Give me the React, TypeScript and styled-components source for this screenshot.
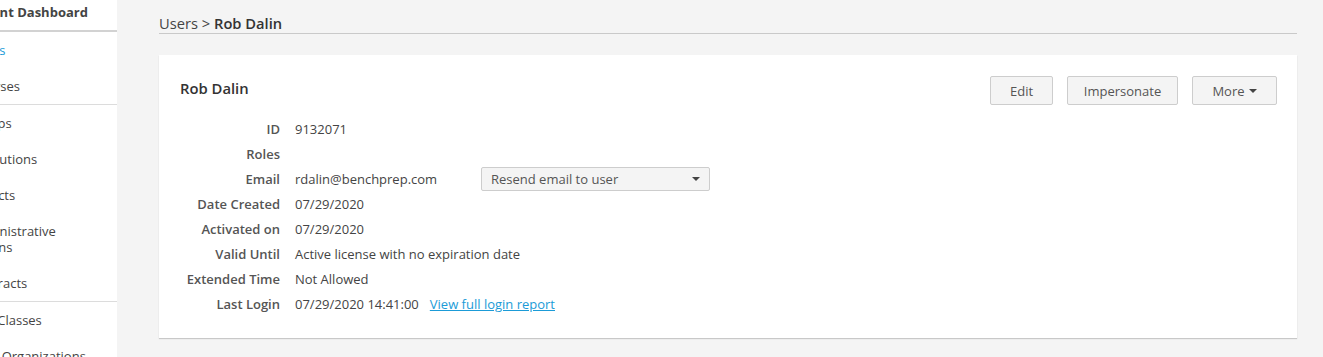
import React from "react";
import styled, { createGlobalStyle } from "styled-components";

const Global = createGlobalStyle`
  html, body, #root { margin: 0; padding: 0; height: 100%; }
  body {
    font-family: "Open Sans", "Liberation Sans", Arial, sans-serif;
    background: #f4f4f4;
    color: #444;
    overflow: hidden;
  }
  * { box-sizing: border-box; }
`;

const Layout = styled.div`
  display: flex;
  height: 357px;
  width: 1323px;
`;

const Sidebar = styled.nav`
  width: 117px;
  flex: 0 0 117px;
  background: #fff;
  overflow: hidden;
  font-size: 13px;
  line-height: 16px;
  color: #444;
`;

const SideHeader = styled.div`
  padding: 4px 0 10px;
  border-bottom: 2px solid #d2d2d2;
  font-weight: 700;
  color: #444;
  white-space: nowrap;
`;

const SideGroup = styled.div<{ $last?: boolean }>`
  border-bottom: ${(p) => (p.$last ? "none" : "1px solid #dcdcdc")};
`;

const SideItem = styled.div<{ $active?: boolean }>`
  padding: 10px 0;
  color: ${(p) => (p.$active ? "#1b9bd7" : "#444")};
`;

const SideText = styled.span<{ $shift?: number }>`
  display: block;
  margin-left: ${(p) => -(p.$shift ?? 31)}px;
  width: 128px;
`;

const Main = styled.main`
  flex: 1;
  padding: 13px 26px 0 42px;
`;

const Breadcrumb = styled.div`
  font-size: 14.7px;
  line-height: 20px;
  color: #444;
  border-bottom: 1px solid #c9c9c9;
  strong { font-weight: 600; color: #333; }
`;

const Card = styled.section`
  margin-top: 21px;
  background: #fff;
  padding: 21px 20px 22px 21px;
  box-shadow: 0 1px 1px rgba(0, 0, 0, 0.18);
`;

const CardHeader = styled.div`
  display: flex;
  align-items: flex-start;
  justify-content: space-between;
`;

const Title = styled.h2`
  margin: 0;
  font-size: 14.8px;
  line-height: 24px;
  font-weight: 600;
  color: #333;
`;

const Actions = styled.div`
  display: flex;
  gap: 14px;
`;

const Button = styled.button<{ $w: number }>`
  width: ${(p) => p.$w}px;
  height: 29px;
  display: inline-flex;
  align-items: center;
  justify-content: center;
  gap: 4px;
  font-family: inherit;
  font-size: 13px;
  color: #555;
  background: #f4f4f4;
  border: 1px solid #cdcdcd;
  border-radius: 2px;
  padding: 0;
`;

const Caret = styled.span`
  display: inline-block;
  width: 0;
  height: 0;
  border-left: 4px solid transparent;
  border-right: 4px solid transparent;
  border-top: 4px solid #444;
  margin-top: 1px;
`;

const Details = styled.dl`
  margin: 11px 0 0;
  display: grid;
  grid-template-columns: 100px 1fr;
  column-gap: 15px;
  font-size: 13px;
`;

const Label = styled.dt`
  height: 25px;
  display: flex;
  align-items: center;
  justify-content: flex-end;
  font-weight: 600;
  color: #555;
  white-space: nowrap;
`;

const Value = styled.dd`
  margin: 0;
  height: 25px;
  display: flex;
  align-items: center;
  color: #444;
  white-space: nowrap;
`;

const EmailText = styled.span`
  width: 186px;
`;

const Select = styled.div`
  width: 229px;
  height: 24px;
  display: flex;
  align-items: center;
  justify-content: space-between;
  padding: 0 9px 0 9px;
  background: #f4f4f4;
  border: 1px solid #cdcdcd;
  border-radius: 2px;
  color: #555;
  font-size: 13px;
`;

const Link = styled.a`
  margin-left: 11px;
  color: #1b9bd7;
  text-decoration: underline;
  cursor: pointer;
`;

const rows: { label: string; value: React.ReactNode }[] = [
  { label: "ID", value: "9132071" },
  { label: "Roles", value: "" },
  {
    label: "Email",
    value: (
      <>
        <EmailText>rdalin@benchprep.com</EmailText>
        <Select>
          <span>Resend email to user</span>
          <Caret />
        </Select>
      </>
    ),
  },
  { label: "Date Created", value: "07/29/2020" },
  { label: "Activated on", value: "07/29/2020" },
  { label: "Valid Until", value: "Active license with no expiration date" },
  { label: "Extended Time", value: "Not Allowed" },
  {
    label: "Last Login",
    value: (
      <>
        <span>07/29/2020 14:41:00</span>
        <Link>View full login report</Link>
      </>
    ),
  },
];

export default function App() {
  return (
    <>
      <Global />
      <Layout>
        <Sidebar>
          <SideHeader>
            <SideText $shift={32}>Tenant Dashboard</SideText>
          </SideHeader>
          <SideGroup>
            <SideItem $active>
              <SideText $shift={29}>Users</SideText>
            </SideItem>
            <SideItem>
              <SideText $shift={29}>Courses</SideText>
            </SideItem>
          </SideGroup>
          <SideGroup>
            <SideItem>
              <SideText $shift={33}>Groups</SideText>
            </SideItem>
            <SideItem>
              <SideText>Institutions</SideText>
            </SideItem>
            <SideItem>
              <SideText $shift={34}>Districts</SideText>
            </SideItem>
            <SideItem>
              <SideText $shift={32}>Administrative Actions</SideText>
            </SideItem>
            <SideItem>
              <SideText>Contracts</SideText>
            </SideItem>
          </SideGroup>
          <SideGroup $last>
            <SideItem>
              <SideText $shift={30}>Live Classes</SideText>
            </SideItem>
            <SideItem>
              <SideText $shift={30}>User Organizations</SideText>
            </SideItem>
          </SideGroup>
        </Sidebar>
        <Main>
          <Breadcrumb>
            Users &gt; <strong>Rob Dalin</strong>
          </Breadcrumb>
          <Card>
            <CardHeader>
              <Title>Rob Dalin</Title>
              <Actions>
                <Button $w={63}>Edit</Button>
                <Button $w={111}>Impersonate</Button>
                <Button $w={85}>
                  More <Caret />
                </Button>
              </Actions>
            </CardHeader>
            <Details>
              {rows.map((r) => (
                <React.Fragment key={r.label}>
                  <Label>{r.label}</Label>
                  <Value>{r.value}</Value>
                </React.Fragment>
              ))}
            </Details>
          </Card>
        </Main>
      </Layout>
    </>
  );
}
